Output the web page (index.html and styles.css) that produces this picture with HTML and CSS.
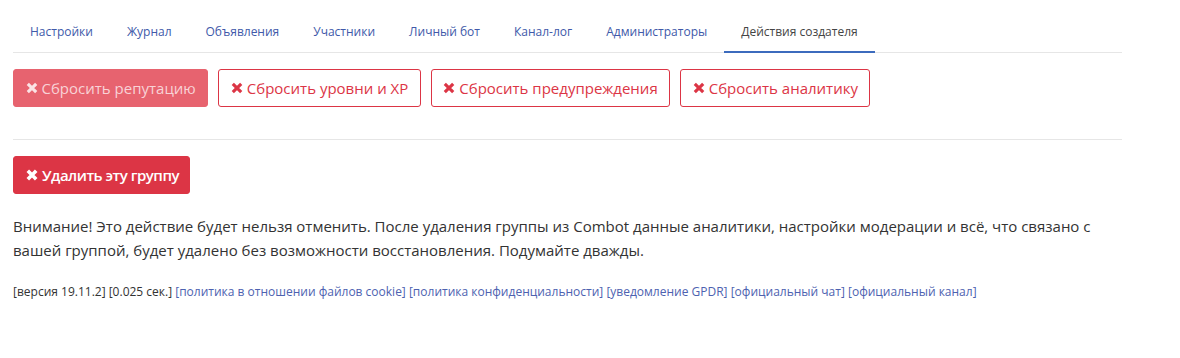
FILE: index.html
```html
<!DOCTYPE html>
<html lang="ru">
<head>
    <meta charset="UTF-8">
    <title>Действия создателя</title>
    <link rel="stylesheet" href="styles.css">
</head>
<body>
    <div class="container">
        <ul class="tabs">
            <li><a href="#">Настройки</a></li>
            <li><a href="#">Журнал</a></li>
            <li><a href="#">Объявления</a></li>
            <li><a href="#">Участники</a></li>
            <li><a href="#">Личный бот</a></li>
            <li><a href="#">Канал-лог</a></li>
            <li><a href="#">Администраторы</a></li>
            <li class="active"><a href="#">Действия создателя</a></li>
        </ul>

        <div class="actions">
            <button class="btn btn-disabled"><svg class="ico" viewBox="0 0 10 10"><path d="M1.5 1.5L8.5 8.5M8.5 1.5L1.5 8.5"/></svg>Сбросить репутацию</button>
            <button class="btn btn-outline"><svg class="ico" viewBox="0 0 10 10"><path d="M1.5 1.5L8.5 8.5M8.5 1.5L1.5 8.5"/></svg>Сбросить уровни и XP</button>
            <button class="btn btn-outline"><svg class="ico" viewBox="0 0 10 10"><path d="M1.5 1.5L8.5 8.5M8.5 1.5L1.5 8.5"/></svg>Сбросить предупреждения</button>
            <button class="btn btn-outline"><svg class="ico" viewBox="0 0 10 10"><path d="M1.5 1.5L8.5 8.5M8.5 1.5L1.5 8.5"/></svg>Сбросить аналитику</button>
        </div>

        <hr class="sep">

        <button class="btn btn-danger"><svg class="ico" viewBox="0 0 10 10"><path d="M1.5 1.5L8.5 8.5M8.5 1.5L1.5 8.5"/></svg>Удалить эту группу</button>

        <p class="warning">Внимание! Это действие будет нельзя отменить. После удаления группы из Combot данные аналитики, настройки модерации и всё, что связано с вашей группой, будет удалено без возможности восстановления. Подумайте дважды.</p>

        <div class="footer">
            [версия 19.11.2] [0.025 сек.]
            <a href="#">[политика в отношении файлов cookie]</a>
            <a href="#">[политика конфиденциальности]</a>
            <a href="#">[уведомление GPDR]</a>
            <a href="#">[официальный чат]</a>
            <a href="#">[официальный канал]</a>
        </div>
    </div>
</body>
</html>
```

FILE: styles.css
```css
*{
    margin: 0;
    padding: 0;
    box-sizing: border-box;
}
body{
    font-family: "Open Sans", "Noto Sans", sans-serif;
    color: #333;
    background: #fff;
}
.container{
    width: 1122px;
    padding-left: 13px;
}
.tabs{
    list-style: none;
    display: flex;
    margin-top: 13px;
    border-bottom: 1px solid #e6e6e6;
}
.tabs li{
    margin-bottom: -1px;
}
.tabs a{
    display: block;
    padding: 9px 17px;
    font-size: 12px;
    line-height: 20px;
    color: #4059a9;
    text-decoration: none;
    border-bottom: 2px solid transparent;
}
.tabs .active a{
    color: #444;
    border-bottom-color: #3c6bbd;
}
.actions{
    display: flex;
    gap: 10px;
    margin-top: 16px;
}
.btn{
    display: inline-flex;
    align-items: center;
    font-family: inherit;
    font-size: 15px;
    line-height: 22px;
    padding: 7px 11.5px;
    border-radius: 3px;
    border: 1px solid #dc3545;
    background: #fff;
    color: #dc3545;
    cursor: pointer;
}
.btn .ico{
    width: 12px;
    height: 12px;
    margin-right: 4px;
    fill: none;
    stroke: currentColor;
    stroke-width: 2.6;
}
.btn-disabled{
    background: #e7636f;
    border-color: #e7636f;
    color: #f8d2d6;
}
.btn-disabled .ico{
    stroke: #fbe3e5;
}
.btn-danger{
    background: #dc3545;
    color: #fff;
    font-weight: 600;
    letter-spacing: -0.5px;
    padding: 7px 10px 7px 12px;
}
.btn-danger .ico{
    stroke-width: 3;
}
.sep{
    border: 0;
    border-top: 1px solid #e6e6e6;
    margin: 32px 0 16px;
}
.warning{
    margin-top: 20px;
    font-size: 15px;
    line-height: 24px;
    color: #333;
}
.footer{
    margin-top: 21px;
    font-size: 12px;
    line-height: 18px;
    color: #333;
}
.footer a{
    color: #4d62b0;
    text-decoration: none;
}
```
